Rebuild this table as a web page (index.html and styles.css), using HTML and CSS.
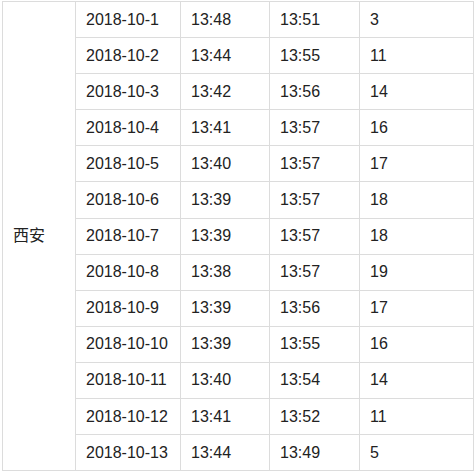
FILE: index.html
```html
<!DOCTYPE html>
<html lang="zh">
<head>
<meta charset="utf-8">
<link rel="stylesheet" href="styles.css">
</head>
<body>
<div class="wrap">
<table class="sun">
<colgroup>
<col class="c1"><col class="c2"><col class="c3"><col class="c4"><col class="c5">
</colgroup>
<tbody>
<tr><td rowspan="13" class="city">西安</td><td>2018-10-1</td><td>13:48</td><td>13:51</td><td>3</td></tr>
<tr><td>2018-10-2</td><td>13:44</td><td>13:55</td><td>11</td></tr>
<tr><td>2018-10-3</td><td>13:42</td><td>13:56</td><td>14</td></tr>
<tr><td>2018-10-4</td><td>13:41</td><td>13:57</td><td>16</td></tr>
<tr><td>2018-10-5</td><td>13:40</td><td>13:57</td><td>17</td></tr>
<tr><td>2018-10-6</td><td>13:39</td><td>13:57</td><td>18</td></tr>
<tr><td>2018-10-7</td><td>13:39</td><td>13:57</td><td>18</td></tr>
<tr><td>2018-10-8</td><td>13:38</td><td>13:57</td><td>19</td></tr>
<tr><td>2018-10-9</td><td>13:39</td><td>13:56</td><td>17</td></tr>
<tr><td>2018-10-10</td><td>13:39</td><td>13:55</td><td>16</td></tr>
<tr><td>2018-10-11</td><td>13:40</td><td>13:54</td><td>14</td></tr>
<tr><td>2018-10-12</td><td>13:41</td><td>13:52</td><td>11</td></tr>
<tr><td>2018-10-13</td><td>13:44</td><td>13:49</td><td>5</td></tr>
</tbody>
</table>
</div>
</body>
</html>
```
FILE: styles.css
```css
html, body {
  margin: 0;
  padding: 0;
  background: #fff;
}
.wrap {
  padding: 1px 0 0 2px;
}
.sun {
  border-collapse: collapse;
  table-layout: fixed;
  width: 471px;
  font-family: "Liberation Sans", Arial, "Noto Sans CJK SC", sans-serif;
  font-size: 16px;
  color: #222;
}
.c1 { width: 73px; }
.c2 { width: 105px; }
.c3 { width: 89px; }
.c4 { width: 90px; }
.c5 { width: 114px; }
.sun td {
  border: 1px solid #dcdcdc;
  height: 35.1px;
  padding: 0 10px;
  line-height: 20px;
  vertical-align: middle;
  text-align: left;
  white-space: nowrap;
}
```
